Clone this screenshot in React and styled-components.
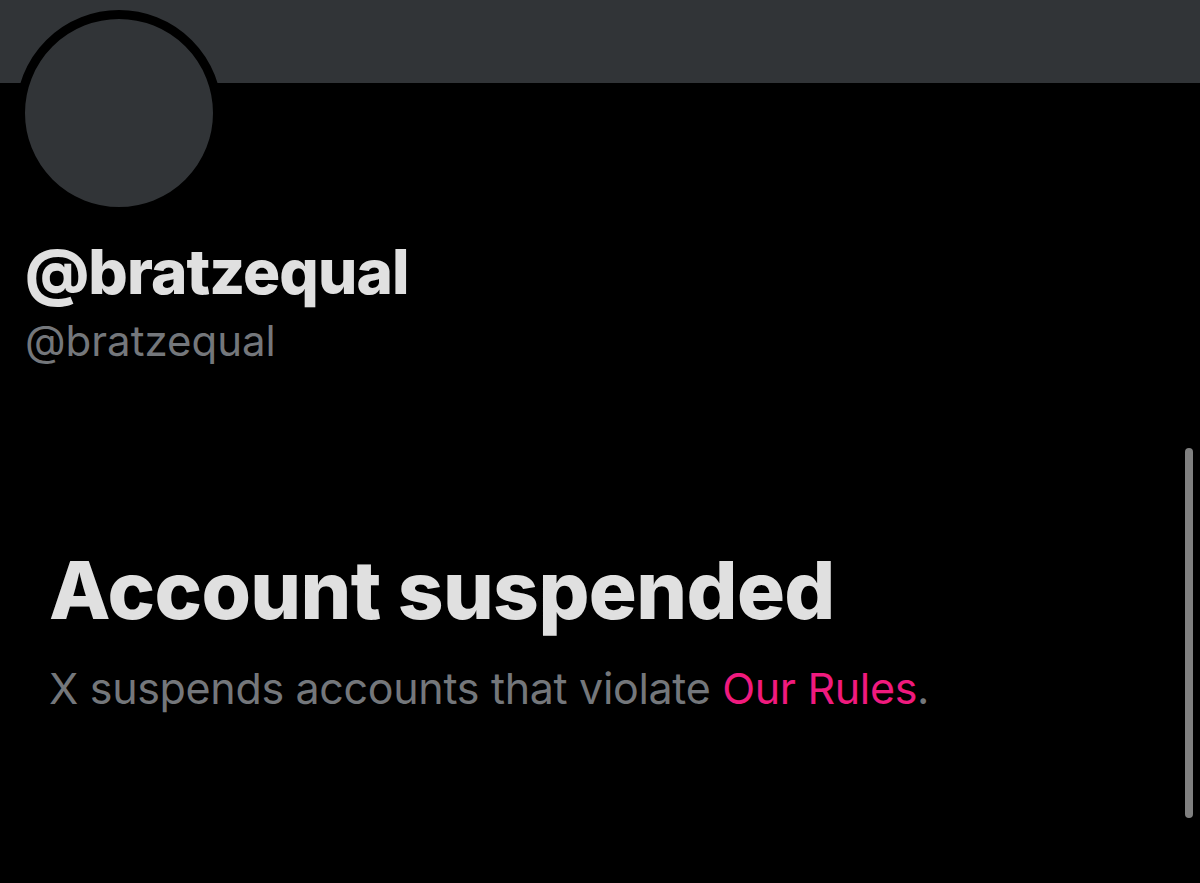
import React from "react";
import styled, { createGlobalStyle } from "styled-components";

const Global = createGlobalStyle`
  html, body { margin: 0; padding: 0; background: #000; }
  body { font-family: Inter, "Liberation Sans", Arial, sans-serif; overflow: hidden; }
`;

const Page = styled.div`
  position: relative;
  width: 1200px;
  height: 883px;
  background: #000;
  overflow: hidden;
`;

const Banner = styled.div`
  height: 83px;
  background: #313437;
`;

const Avatar = styled.div`
  width: 188px;
  height: 188px;
  margin: -73px 0 0 16px;
  border: 9px solid #000;
  border-radius: 50%;
  background: #313437;
`;

const Names = styled.div`
  display: flex;
  flex-direction: column;
  padding-left: 25px;
  margin-top: 21px;
  gap: 9px;
`;

const DisplayName = styled.div`
  color: #e0e0e0;
  font-size: 62px;
  font-weight: 800;
  line-height: 70px;
  letter-spacing: -0.9px;
`;

const Handle = styled.div`
  color: #74777b;
  font-size: 42px;
  line-height: 50px;
`;

const Notice = styled.div`
  display: flex;
  flex-direction: column;
  padding-left: 49px;
  margin-top: 179px;
  gap: 27px;
`;

const Title = styled.h1`
  margin: 0;
  color: #e0e0e0;
  font-size: 80px;
  font-weight: 800;
  line-height: 90px;
  letter-spacing: -0.6px;
`;

const Text = styled.p`
  margin: 0;
  color: #74777b;
  font-size: 43px;
  line-height: 52px;
  letter-spacing: -0.33px;
`;

const Link = styled.a`
  color: #f01a7e;
  text-decoration: none;
`;

const Scrollbar = styled.div`
  position: absolute;
  right: 7px;
  top: 448px;
  width: 8px;
  height: 370px;
  border-radius: 4px;
  background: #808080;
`;

export default function App() {
  return (
    <Page>
      <Global />
      <Banner />
      <Avatar />
      <Names>
        <DisplayName>@bratzequal</DisplayName>
        <Handle>@bratzequal</Handle>
      </Names>
      <Notice>
        <Title>Account suspended</Title>
        <Text>
          X suspends accounts that violate <Link href="#">Our Rules</Link>.
        </Text>
      </Notice>
      <Scrollbar />
    </Page>
  );
}
